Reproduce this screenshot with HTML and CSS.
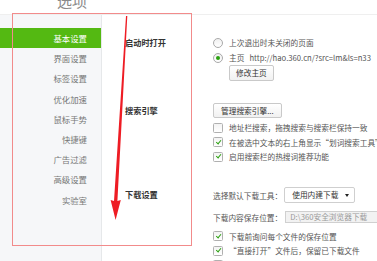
FILE: index.html
```html
<!DOCTYPE html>
<html lang="zh-CN">
<head>
<meta charset="utf-8">
<title>选项</title>
<link rel="stylesheet" href="styles.css">
</head>
<body>
<div class="page">
  <header class="header"><h1 class="title">选项</h1></header>
  <div class="main">
    <nav class="sidebar">
      <div class="nav-item active">基本设置</div>
      <div class="nav-item">界面设置</div>
      <div class="nav-item">标签设置</div>
      <div class="nav-item">优化加速</div>
      <div class="nav-item">鼠标手势</div>
      <div class="nav-item">快捷键</div>
      <div class="nav-item">广告过滤</div>
      <div class="nav-item">高级设置</div>
      <div class="nav-item">实验室</div>
    </nav>
    <main class="content">
      <section class="section s-start">
        <div class="label">启动时打开</div>
        <div class="opts">
          <div class="row"><span class="radio"></span><span>上次退出时未关闭的页面</span></div>
          <div class="row"><span class="radio on"></span><span>主页</span><span class="url">http://hao.360.cn/?src=lm&amp;ls=n33</span></div>
          <div class="row indent"><button class="btn">修改主页</button></div>
        </div>
      </section>
      <section class="section s-search">
        <div class="label">搜索引擎</div>
        <div class="opts">
          <div class="row btn-row"><button class="btn">管理搜索引擎...</button></div>
          <div class="row chk"><span class="box"></span><span>地址栏搜索，拖拽搜索与搜索栏保持一致</span></div>
          <div class="row chk"><span class="box on"></span><span>在被选中文本的右上角显示“划词搜索工具”</span></div>
          <div class="row chk"><span class="box on"></span><span>启用搜索栏的热搜词推荐功能</span></div>
        </div>
      </section>
      <section class="section s-download">
        <div class="label">下载设置</div>
        <div class="opts">
          <div class="row sel-row"><span>选择默认下载工具：</span><span class="select">使用内建下载<span class="caret"></span></span></div>
          <div class="row path-row"><span>下载内容保存位置：</span><span class="input">D:\360安全浏览器下载</span></div>
          <div class="row chk first"><span class="box on"></span><span>下载前询问每个文件的保存位置</span></div>
          <div class="row chk"><span class="box on"></span><span>“直接打开”文件后，保留已下载文件</span></div>
          <div class="row chk"><span class="box"></span><span>下载完成后显示提示</span></div>
        </div>
      </section>
    </main>
  </div>
  <div class="mark-box"></div>
  <svg class="mark-arrow" width="377" height="261" viewBox="0 0 377 261">
    <polygon points="126,16 127.3,16 117.4,201 120.8,200 115.6,220 110.6,200 114,201" fill="#ee1c24"/>
  </svg>
</div>
</body>
</html>
```
FILE: styles.css
```css
html, body {
  margin: 0;
  padding: 0;
  background: #fff;
}
.page {
  position: relative;
  width: 377px;
  height: 261px;
  overflow: hidden;
  font-family: "Noto Sans CJK SC", "Noto Sans", sans-serif;
  color: #555;
}
.header {
  height: 14px;
  border-bottom: 1px solid #efefef;
  overflow: hidden;
}
.title {
  margin: -8px 0 0 57px;
  font-size: 15px;
  line-height: 18px;
  font-weight: normal;
  color: #8a8a8a;
}
.main {
  display: flex;
  height: 246px;
}
.sidebar {
  width: 101px;
  flex: none;
  background: #f6f7f9;
  border-right: 1px solid #e6e8ea;
  padding-top: 13px;
}
.nav-item {
  height: 20.2px;
  line-height: 20.2px;
  text-align: right;
  padding-right: 14px;
  font-size: 8.4px;
  color: #777;
}
.nav-item.active {
  background: #54b912;
  color: #fff;
}
.content {
  flex: 1;
  padding-left: 23px;
  font-size: 7.7px;
}
.section {
  display: flex;
}
.label {
  width: 88px;
  flex: none;
  font-size: 8.2px;
  font-weight: bold;
  color: #333;
  height: 15px;
  line-height: 15px;
}
.opts {
  flex: 1;
  display: flex;
  flex-direction: column;
}
.row {
  display: flex;
  align-items: center;
  height: 15px;
  white-space: nowrap;
}
.s-start { padding-top: 20px; }
.s-search { padding-top: 22px; }
.s-download { padding-top: 23px; }
.s-search .label { height: 15px; }
.radio {
  width: 8px;
  height: 8px;
  border: 1px solid #a9a9a9;
  border-radius: 50%;
  background: linear-gradient(#f0f0f0, #fff);
  margin-right: 6px;
  position: relative;
  flex: none;
}
.radio.on::after {
  content: "";
  position: absolute;
  left: 2px;
  top: 2px;
  width: 4px;
  height: 4px;
  border-radius: 50%;
  background: #2aa10f;
}
.url {
  margin-left: 5px;
}
.indent {
  padding-left: 16px;
  height: 16px;
}
.btn {
  font-family: inherit;
  font-size: 7.7px;
  color: #333;
  height: 16px;
  padding: 0 6px;
  border: 1px solid #c9c9c9;
  border-radius: 2px;
  background: linear-gradient(#fff, #f1f1f1);
  line-height: 14px;
  margin: 0;
}
.btn-row {
  height: 15px;
  margin-bottom: 2.5px;
}
.btn-row .btn {
  height: 15px;
  padding: 0 7px;
}
.chk {
  height: 14.5px;
}
.box {
  width: 8px;
  height: 8px;
  border: 1px solid #b0b0b0;
  border-radius: 1.5px;
  background: linear-gradient(#f3f3f3, #fff);
  margin-right: 6px;
  position: relative;
  flex: none;
}
.box.on::after {
  content: "";
  position: absolute;
  left: 2.6px;
  top: 0.6px;
  width: 2px;
  height: 4.4px;
  border: solid #2aa10f;
  border-width: 0 1.4px 1.4px 0;
  transform: rotate(40deg);
}
.sel-row {
  height: 16px;
}
.select {
  margin-left: 2px;
  width: 62px;
  height: 14px;
  border: 1px solid #cfcfcf;
  border-radius: 2px;
  padding-left: 7px;
  line-height: 14px;
  color: #333;
  position: relative;
  background: #fff;
}
.caret {
  position: absolute;
  right: 5px;
  top: 5.5px;
  width: 0;
  height: 0;
  border-left: 2.5px solid transparent;
  border-right: 2.5px solid transparent;
  border-top: 3px solid #222;
}
.path-row {
  margin-top: 8px;
  height: 12px;
}
.input {
  margin-left: 3px;
  height: 10px;
  width: 120px;
  border: 1px solid #d0d0d0;
  background: #f2f2f2;
  color: #9a9a9a;
  padding-left: 4px;
  line-height: 10px;
}
.chk.first {
  margin-top: 5.75px;
}
.mark-box {
  position: absolute;
  left: 12px;
  top: 13px;
  width: 178px;
  height: 231px;
  border: 1px solid #f28b8b;
  pointer-events: none;
}
.mark-arrow {
  position: absolute;
  left: 0;
  top: 0;
  pointer-events: none;
}
```
